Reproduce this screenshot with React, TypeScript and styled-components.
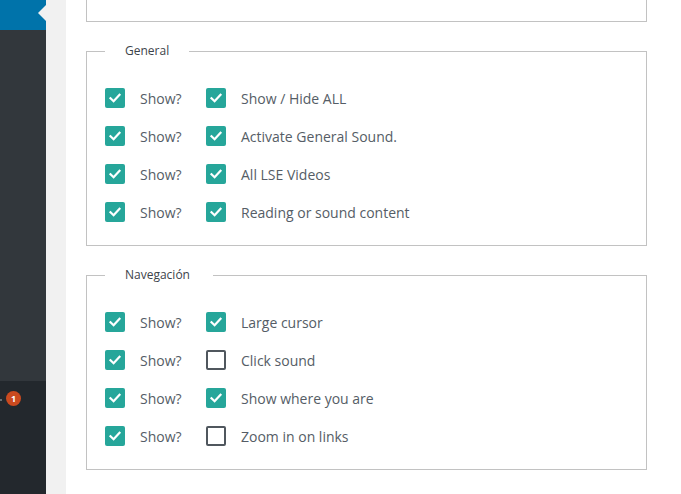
import React from "react";
import styled, { createGlobalStyle } from "styled-components";

const Global = createGlobalStyle`
  html, body { margin: 0; padding: 0; background: #fff; }
  body { font-family: "Open Sans", "Noto Sans", sans-serif; overflow: hidden; }
  #root { height: 494px; }
`;

const Page = styled.div`
  display: flex;
  height: 494px;
  width: 681px;
  overflow: hidden;
`;

const Sidebar = styled.aside`
  width: 46px;
  flex: none;
  display: flex;
  flex-direction: column;
  background: #32373c;
`;

const ActiveItem = styled.div`
  position: relative;
  height: 30px;
  background: #0073aa;
  &::after {
    content: "";
    position: absolute;
    right: 0;
    top: 5px;
    border-style: solid;
    border-width: 8px 8px 8px 0;
    border-color: transparent #f1f1f1 transparent transparent;
  }
`;

const MenuSpacer = styled.div`
  flex: 1;
`;

const Submenu = styled.div`
  height: 113px;
  background: #23282d;
  padding-top: 10px;
  box-sizing: border-box;
  position: relative;
`;

const Badge = styled.span`
  display: flex;
  align-items: center;
  justify-content: center;
  width: 15px;
  height: 15px;
  margin-left: 6px;
  border-radius: 50%;
  background: #ca4a1f;
  color: #fff;
  font-size: 9px;
  font-weight: 700;
  font-family: "Open Sans", sans-serif;
`;

const Dot = styled.span`
  position: absolute;
  left: 0;
  top: 18px;
  width: 2px;
  height: 2px;
  background: #6c7074;
`;

const Gutter = styled.div`
  width: 20px;
  flex: none;
  background: #f1f1f1;
`;

const Content = styled.main`
  flex: 1;
  padding-left: 20px;
  display: flex;
  flex-direction: column;
  gap: 21px;
  margin-top: -40px;
`;

const Box = styled.fieldset`
  width: 561px;
  box-sizing: border-box;
  margin: 0;
  border: 1px solid #c2c2c2;
  padding: 20px 18px 14px;
  min-width: 0;
`;

const TopBox = styled(Box)`
  height: 62px;
`;

const Legend = styled.legend<{ $extra?: number }>`
  padding: 0 ${(p) => 20 + (p.$extra ?? 0)}px 0 20px;
  font-size: 12px;
  color: #3c434a;
  line-height: 16px;
`;

const Row = styled.div`
  display: flex;
  align-items: center;
  height: 38px;
`;

const Item = styled.label<{ $w?: number }>`
  display: flex;
  align-items: center;
  gap: 15px;
  width: ${(p) => (p.$w ? `${p.$w}px` : "auto")};
  font-size: 14px;
  color: #555d66;
`;

const Check = styled.span<{ $on: boolean }>`
  width: 20px;
  height: 20px;
  box-sizing: border-box;
  border-radius: 2px;
  flex: none;
  display: flex;
  align-items: center;
  justify-content: center;
  background: ${(p) => (p.$on ? "#26a69a" : "#fff")};
  border: ${(p) => (p.$on ? "none" : "2px solid #50575e")};
`;

const CheckBox = ({ on }: { on: boolean }) => (
  <Check $on={on}>
    {on && (
      <svg width="14" height="14" viewBox="0 0 14 14">
        <path d="M2.5 7.2 L5.6 10.2 L11.5 3.8" fill="none" stroke="#fff" strokeWidth="2.2" strokeLinecap="square" />
      </svg>
    )}
  </Check>
);

type Opt = { label: string; on: boolean };

const general: Opt[] = [
  { label: "Show / Hide ALL", on: true },
  { label: "Activate General Sound.", on: true },
  { label: "All LSE Videos", on: true },
  { label: "Reading or sound content", on: true },
];

const nav: Opt[] = [
  { label: "Large cursor", on: true },
  { label: "Click sound", on: false },
  { label: "Show where you are", on: true },
  { label: "Zoom in on links", on: false },
];

const Group = ({ title, items, extra }: { title: string; items: Opt[]; extra?: number }) => (
  <Box>
    <Legend $extra={extra}>{title}</Legend>
    {items.map((o) => (
      <Row key={o.label}>
        <Item $w={101}>
          <CheckBox on={true} />
          Show?
        </Item>
        <Item>
          <CheckBox on={o.on} />
          {o.label}
        </Item>
      </Row>
    ))}
  </Box>
);

export default function App() {
  return (
    <>
      <Global />
      <Page>
        <Sidebar>
          <ActiveItem />
          <MenuSpacer />
          <Submenu>
            <Dot />
            <Badge>1</Badge>
          </Submenu>
        </Sidebar>
        <Gutter />
        <Content>
          <TopBox />
          <Group title="General" items={general} />
          <Group title="Navegación" items={nav} extra={3} />
        </Content>
      </Page>
    </>
  );
}
